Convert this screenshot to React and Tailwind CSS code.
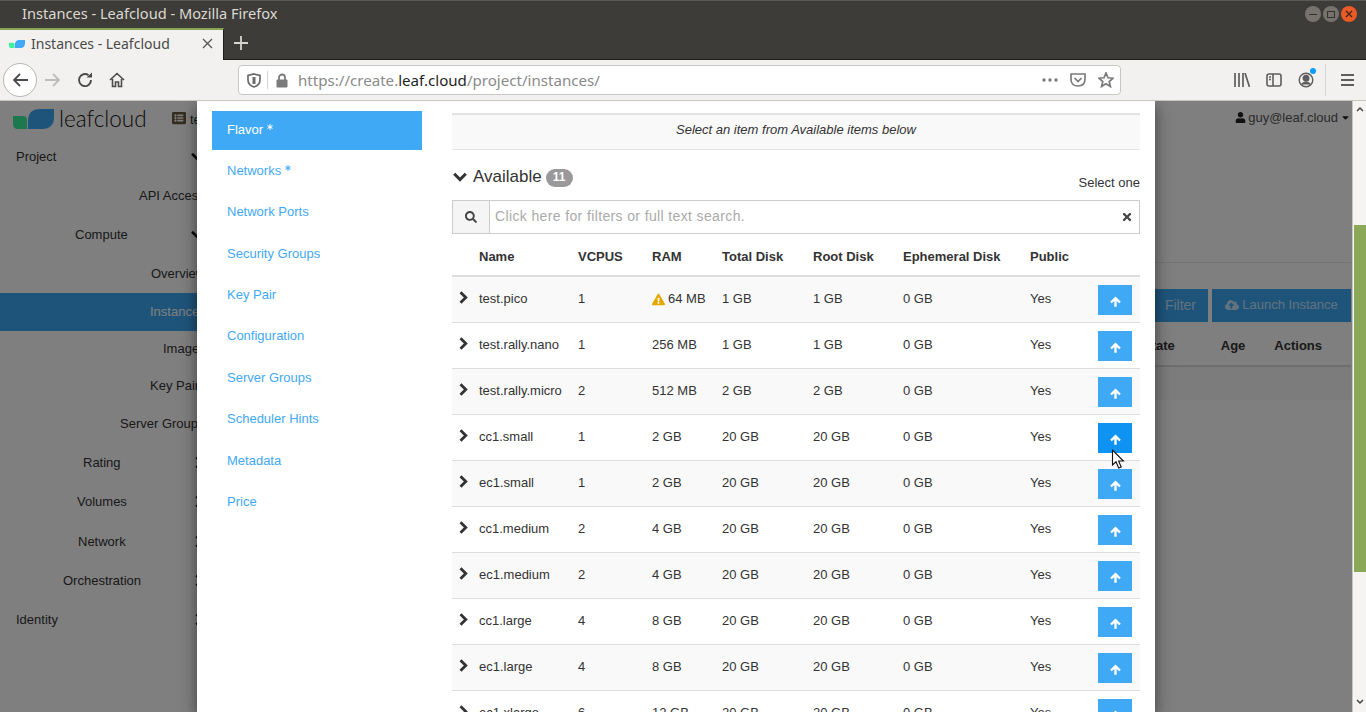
import React from "react";
import { FaSearch, FaTimes, FaExclamationTriangle, FaUser, FaCloudUploadAlt, FaAsterisk, FaCaretDown, FaListAlt } from "react-icons/fa";

const sidebar = [
  ["Project", "h-[39px] pl-[16px]", "down"],
  ["API Access", "h-[39px] pl-[139px]", ""],
  ["Compute", "h-[39px] pl-[75px]", "down"],
  ["Overview", "h-[39px] pl-[151px]", ""],
  ["Instances", "h-[38px] pl-[150px] bg-[#3fa9f5] text-white", ""],
  ["Images", "h-[36px] pl-[163px]", ""],
  ["Key Pairs", "h-[38px] pl-[150px]", ""],
  ["Server Groups", "h-[38px] pl-[120px]", ""],
  ["Rating", "h-[39px] pl-[83px]", "right"],
  ["Volumes", "h-[40px] pl-[77px]", "right"],
  ["Network", "h-[39px] pl-[78px]", "right"],
  ["Orchestration", "h-[39px] pl-[63px]", "right"],
  ["Identity", "h-[39px] pl-[16px]", "right"],
];

const steps = ["Flavor", "Networks", "Network Ports", "Security Groups", "Key Pair", "Configuration", "Server Groups", "Scheduler Hints", "Metadata", "Price"];

const rows = [
  ["test.pico", "1", "64 MB", "1 GB", "1 GB"],
  ["test.rally.nano", "1", "256 MB", "1 GB", "1 GB"],
  ["test.rally.micro", "2", "512 MB", "2 GB", "2 GB"],
  ["cc1.small", "1", "2 GB", "20 GB", "20 GB"],
  ["ec1.small", "1", "2 GB", "20 GB", "20 GB"],
  ["cc1.medium", "2", "4 GB", "20 GB", "20 GB"],
  ["ec1.medium", "2", "4 GB", "20 GB", "20 GB"],
  ["cc1.large", "4", "8 GB", "20 GB", "20 GB"],
  ["ec1.large", "4", "8 GB", "20 GB", "20 GB"],
  ["ec1.xlarge", "6", "12 GB", "20 GB", "20 GB"],
];

const cols = "grid grid-cols-[27px_99px_74px_70px_91px_90px_127px_68px_42px]";

function Leaf({ className }) {
  return (
    <svg viewBox="0 0 41 20" className={className}>
      <path d="M0 7 H10 Q14 7 14 11 V20 H5 Q0 20 0 15 Z" fill="#3df09c" />
      <path d="M15 20 V12 Q15 0 27 0 H41 V8 Q41 20 29 20 Z" fill="#3fa9f5" />
    </svg>
  );
}

function ChevRight({ className }) {
  return (
    <svg viewBox="0 0 9 13" className={className} fill="none" stroke="currentColor" strokeWidth="2.8"><path d="M1.5 1.2 L6.8 6.5 L1.5 11.8" /></svg>
  );
}

function ChevDown({ className }) {
  return (
    <svg viewBox="0 0 14 10" className={className} fill="none" stroke="currentColor" strokeWidth="3"><path d="M1.2 1.8 L7 7.6 L12.8 1.8" /></svg>
  );
}

function Browser() {
  return (
    <div className="shrink-0">
      <div className="h-[28px] bg-[#3d3c38] border-t border-[#5a5955] flex items-center pl-[22px] pb-[1px] relative">
        <span className="text-[14.6px] text-[#dcd9d2] font-['Noto_Sans',sans-serif]">Instances - Leafcloud - Mozilla Firefox</span>
        <div className="absolute right-[9px] top-[5px] flex gap-[2px]">
          <div className="w-[16px] h-[16px] rounded-full bg-[#75736c] flex items-center justify-center">
            <div className="w-[8px] h-[1px] bg-[#33322e]" />
          </div>
          <div className="w-[16px] h-[16px] rounded-full bg-[#75736c] flex items-center justify-center">
            <div className="w-[8px] h-[7px] border border-[#33322e]" />
          </div>
          <div className="w-[16px] h-[16px] rounded-full bg-[#e95a26] flex items-center justify-center">
            <svg width="8" height="8" viewBox="0 0 8 8"><path d="M1 1 L7 7 M7 1 L1 7" stroke="#40261a" strokeWidth="1.3" /></svg>
          </div>
        </div>
      </div>
      <div className="h-[32px] bg-[#3d3c38] flex border-b border-[#1c1c1a]">
        <div className="w-[224px] h-[32px] bg-[#f3f1ef] border-t-2 border-[#87a556] border-r border-r-[#1c1c1a] flex items-center pl-[9px] pb-[3px] relative">
          <Leaf className="w-[16px] h-[8px]" />
          <span className="ml-[6px] text-[14px] text-[#4a4a48] font-['Noto_Sans',sans-serif]">Instances - Leafcloud</span>
          <svg className="absolute left-[202px] top-[8px]" width="11" height="11" viewBox="0 0 11 11"><path d="M1 1 L10 10 M10 1 L1 10" stroke="#555" strokeWidth="1.3" /></svg>
        </div>
        <svg className="ml-[10px] mt-[8px]" width="14" height="14" viewBox="0 0 14 14"><path d="M7 0 V14 M0 7 H14" stroke="#d8d6d0" strokeWidth="1.8" /></svg>
      </div>
      <div className="h-[41px] bg-[#f3f1ef] border-b border-[#c9c6c0] flex items-center pl-[3px] relative">
        <div className="w-[34px] h-[34px] rounded-full border border-[#b8b6b2] bg-white flex items-center justify-center">
          <svg width="17" height="16" viewBox="0 0 17 16" fill="none" stroke="#4b4b4b" strokeWidth="1.8"><path d="M16 8 H2 M8 2 L2 8 L8 14" /></svg>
        </div>
        <svg className="ml-[7px]" width="17" height="16" viewBox="0 0 17 16" fill="none" stroke="#bdbcb9" strokeWidth="1.8"><path d="M1 8 H15 M9 2 L15 8 L9 14" /></svg>
        <svg className="ml-[16px]" width="16" height="16" viewBox="0 0 16 16" fill="none" stroke="#4b4b4b" strokeWidth="1.9"><path d="M14 8 A6 6 0 1 1 11.5 3.2" /><path d="M9.5 5.6 H15 V0.5" fill="#4b4b4b" stroke="none" /></svg>
        <svg className="ml-[16px]" width="16" height="16" viewBox="0 0 16 16" fill="none" stroke="#4b4b4b" strokeWidth="1.6"><path d="M1 8 L8 1.5 L15 8 M3.5 7 V14.5 H6.5 V10 H9.5 V14.5 H12.5 V7" /></svg>
        <div className="ml-[113px] w-[883px] h-[30px] bg-white border border-[#c8c6c2] rounded-[4px] flex items-center pl-[8px] pr-[6px]">
          <svg width="14" height="15" viewBox="0 0 14 15" fill="none" stroke="#6b6b6b" strokeWidth="1.7"><path d="M7 1 L13 2.5 V7 Q13 12 7 14 Q1 12 1 7 V2.5 Z" /><path d="M7 4 V11" strokeWidth="3" /></svg>
          <div className="ml-[6px] w-[1px] h-[18px] bg-[#d4d2ce]" />
          <svg className="ml-[8px]" width="12" height="15" viewBox="0 0 12 15"><path d="M3 7 V4.5 a3 3 0 0 1 6 0 V7" fill="none" stroke="#7b7b7b" strokeWidth="1.8" /><rect x="0.5" y="6.5" width="11" height="8" rx="1" fill="#7b7b7b" /></svg>
          <span className="ml-[10px] text-[15.1px] text-[#8a8a8a] font-['Noto_Sans',sans-serif]">https://create.<span className="text-[#1f1f1f]">leaf.cloud</span>/project/instances/</span>
          <div className="ml-auto flex items-center">
            <svg width="16" height="4" viewBox="0 0 16 4" fill="#7b7b7b"><circle cx="2" cy="2" r="1.7" /><circle cx="8" cy="2" r="1.7" /><circle cx="14" cy="2" r="1.7" /></svg>
            <svg className="ml-[12px]" width="16" height="14" viewBox="0 0 16 14" fill="none" stroke="#7b7b7b" strokeWidth="1.7"><path d="M1 1 H15 V6 Q15 13 8 13 Q1 13 1 6 Z" /><path d="M4.5 5 L8 8.5 L11.5 5" /></svg>
            <svg className="ml-[12px]" width="16" height="16" viewBox="0 0 16 16" fill="none" stroke="#7b7b7b" strokeWidth="1.7"><path d="M8 1 L10 5.8 L15 6.2 L11.2 9.5 L12.4 14.5 L8 11.8 L3.6 14.5 L4.8 9.5 L1 6.2 L6 5.8 Z" /></svg>
          </div>
        </div>
        <svg className="ml-[113px]" width="16" height="14" viewBox="0 0 16 14" fill="none" stroke="#5e5e5e" strokeWidth="1.7"><path d="M1 0 V14 M5 0 V14 M9 0 V14 M11 0 L15.5 14" /></svg>
        <svg className="ml-[16px]" width="16" height="14" viewBox="0 0 16 14" fill="none" stroke="#5e5e5e" strokeWidth="1.6"><rect x="1" y="1" width="14" height="12" rx="2" /><path d="M7 1 V13 M3 4 H5 M3 6.5 H5" /></svg>
        <div className="ml-[16px] relative">
          <svg width="16" height="16" viewBox="0 0 16 16" fill="none" stroke="#5e5e5e" strokeWidth="1.4"><circle cx="8" cy="8" r="6.8" /><circle cx="8" cy="6.3" r="2.8" fill="#5e5e5e" /><path d="M3.5 12.5 Q8 8 12.5 12.5" fill="#5e5e5e" /></svg>
          <div className="absolute left-[12px] top-[-4px] w-[6px] h-[6px] rounded-full bg-[#0a9dff]" />
        </div>
        <div className="ml-[11px] w-[1px] h-[32px] bg-[#d8d6d2]" />
        <svg className="ml-[15px]" width="13" height="12" viewBox="0 0 13 12" fill="none" stroke="#5e5e5e" strokeWidth="1.8"><path d="M0 1 H13 M0 6 H13 M0 11 H13" /></svg>
      </div>
    </div>
  );
}

function Behind() {
  return (
    <div className="absolute inset-0 bg-white flex text-[13px] text-[#333] font-['Liberation_Sans',sans-serif]">
      <div className="w-[220px] shrink-0">
        <div className="h-[36px] flex items-center pl-[13px] relative">
          <Leaf className="w-[41px] h-[20px] mt-[-1px]" />
          <span className="ml-[5px] text-[22.5px] leading-none text-[#111] font-light font-['Lato',sans-serif]">leafcloud</span>
          <FaListAlt className="absolute left-[172px] top-[10px] text-[14px] text-[#6b5a3a]" />
          <span className="absolute left-[190px] top-[9px]">test</span>
        </div>
        {sidebar.map(([t, c, ic]) => (
          <div key={t} className={`flex items-center relative ${c}`}>
            <span className="whitespace-nowrap">{t}</span>
            {ic === "down" && <ChevDown className="absolute left-[191px] top-[15px] w-[12px] h-[9px] text-[#111]" />}
            {ic === "right" && <ChevRight className="absolute left-[195px] top-[13px] w-[9px] h-[13px] text-[#111]" />}
          </div>
        ))}
      </div>
      <div className="flex-1 min-w-0 flex flex-col items-end pr-[1px]">
        <div className="h-[33px] flex items-center">
          <FaUser className="text-[11px] text-[#222]" />
          <span className="ml-[2px] text-[#555]">guy@leaf.cloud</span>
          <FaCaretDown className="ml-[2px] text-[11px] text-[#222]" />
        </div>
        <div className="w-full h-[1px] bg-[#e8e8e8] mt-[128px]" />
        <div className="mt-[26px] flex gap-[4px]">
          <div className="h-[33px] pl-[12px] pr-[12px] bg-[#3fa9f5] text-[14px] text-white/70 flex items-center">Filter</div>
          <div className="h-[33px] w-[139px] bg-[#3fa9f5] text-white/70 flex items-center justify-center gap-[3px] pb-[2px]">
            <FaCloudUploadAlt className="text-[14px]" />
            <span>Launch Instance</span>
          </div>
        </div>
        <div className="w-full h-[45px] border-b-2 border-[#ddd] flex items-end justify-end pb-[10px] pr-[29px] font-bold gap-[29px]">
          <span className="mr-[17px]">Power State</span>
          <span>Age</span>
          <span>Actions</span>
        </div>
        <div className="w-full h-[33px] bg-[#f9f9f9]" />
      </div>
    </div>
  );
}

function Modal() {
  return (
    <div className="absolute left-[197px] top-0 bottom-0 w-[958px] bg-white shadow-[0_5px_15px_rgba(0,0,0,0.5)] flex text-[13px] text-[#333] font-['Liberation_Sans',sans-serif]">
      <div className="w-[255px] shrink-0 pt-[10px] pl-[15px] pr-[18px]">
        <div className="w-[210px] flex flex-col gap-[2.35px]">
          {steps.map((s, i) => (
            <div key={s} className={`h-[39px] pl-[15px] pb-[2px] flex items-center ${i === 0 ? "bg-[#3fa9f5] text-white" : "text-[#3fa9f5]"}`}>
              <span>{s}</span>
              {i < 2 && <FaAsterisk className="ml-[4px] mb-[6px] text-[6px]" />}
            </div>
          ))}
        </div>
      </div>
      <div className="w-[688px] shrink-0 relative">
        <div className="mt-[12px] border-t-2 border-[#e3e3e3] border-b border-b-[#e3e3e3] bg-[#f9f9f9] h-[37px] flex items-center justify-center pb-[4px]">
          <em>Select an item from Available items below</em>
        </div>
        <div className="h-[50px] flex justify-between">
          <div className="pt-[14px] flex items-start">
            <ChevDown className="mt-[8px] ml-[1px] w-[14px] h-[10px] text-[#333]" />
            <span className="ml-[6px] mt-[1px] text-[17px] leading-[24px]">Available</span>
            <span className="ml-[4px] mt-[5px] w-[27px] h-[18px] rounded-[9px] bg-[#999] text-white text-[12px] font-bold flex items-center justify-center pb-[2px]">11</span>
          </div>
          <span className="pt-[25px] leading-[16px]">Select one</span>
        </div>
        <div className="h-[34px] border border-[#ccc] flex items-center">
          <div className="w-[37px] h-full bg-[#f5f5f5] border-r border-[#ccc] flex items-center justify-center">
            <FaSearch className="text-[12px] text-[#444]" />
          </div>
          <span className="ml-[5px] pb-[1px] text-[14px] text-[#aaa] tracking-[0.37px]">Click here for filters or full text search.</span>
          <FaTimes className="ml-auto mr-[6px] text-[12px] text-[#444]" />
        </div>
        <div className={`${cols} h-[43px] border-b-2 border-[#ddd] pt-[13px] leading-[20px] font-bold text-[#333]`}>
          <span />
          <span>Name</span>
          <span>VCPUS</span>
          <span>RAM</span>
          <span>Total Disk</span>
          <span>Root Disk</span>
          <span>Ephemeral Disk</span>
          <span>Public</span>
          <span />
        </div>
        {rows.map((r, i) => (
          <div key={r[0]} className={`${cols} h-[46px] border-b border-[#ddd] pt-[8px] leading-[28px] ${i % 2 === 0 ? "bg-[#f9f9f9]" : "bg-white"}`}>
            <ChevRight className="ml-[7px] mt-[6px] w-[9px] h-[13px] text-[#333]" />
            <span>{r[0]}</span>
            <span>{r[1]}</span>
            <span className="flex items-center h-[28px]">
              {i === 0 && <FaExclamationTriangle className="mr-[3px] text-[13px] text-[#e6a800]" />}
              {r[2]}
            </span>
            <span>{r[3]}</span>
            <span>{r[4]}</span>
            <span>0 GB</span>
            <span>Yes</span>
            <div className={`w-[34px] h-[30px] flex items-center justify-center ${i === 3 ? "bg-[#0e93f3]" : "bg-[#3fa9f5]"}`}>
              <svg className="mt-[2px]" width="11" height="11" viewBox="0 0 11 11" fill="#fff"><path d="M5.5 0.5 L10.8 5.8 L9.2 7.3 L6.7 4.9 V10.8 H4.3 V4.9 L1.8 7.3 L0.2 5.8 Z" /></svg>
            </div>
          </div>
        ))}
      </div>
    </div>
  );
}

export default function App() {
  return (
    <div className="h-[712px] w-[1366px] overflow-hidden flex flex-col">
      <Browser />
      <div className="flex-1 min-h-0 flex relative">
        <div className="w-[1352px] relative overflow-hidden">
          <Behind />
          <div className="absolute inset-0 bg-black/50" />
          <Modal />
        </div>
        <div className="w-[14px] bg-[#f5f4f2] border-l border-[#c8c6c2] pl-[1px] pt-[124px] relative">
          <div className="h-[347px] bg-[#8aa858]" />
          <svg className="absolute left-[3px] top-[5px]" width="8" height="6" viewBox="0 0 8 6" fill="none" stroke="#444" strokeWidth="1.5"><path d="M1 5 L4 2 L7 5" /></svg>
          <svg className="absolute left-[3px] bottom-[7px]" width="8" height="6" viewBox="0 0 8 6" fill="none" stroke="#444" strokeWidth="1.5"><path d="M1 1 L4 4 L7 1" /></svg>
        </div>
        <svg className="absolute left-[1111px] top-[348px]" width="14" height="21" viewBox="0 0 14 21"><path d="M1.5 1 V16 L5 12.8 L7.7 19 L10.2 18 L7.6 12 H12.4 Z" fill="#fff" stroke="#111" strokeWidth="1.1" /></svg>
      </div>
    </div>
  );
}
